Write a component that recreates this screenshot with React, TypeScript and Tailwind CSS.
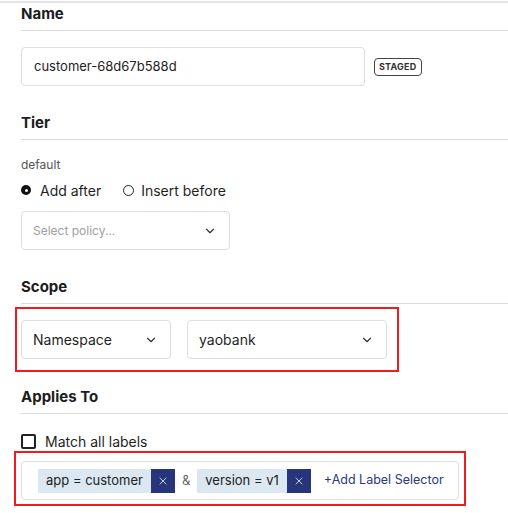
import { ChevronDown, X } from "lucide-react";

const font = { fontFamily: "Inter, 'Open Sans', sans-serif" };

function Heading({ children, className = "" }: { children: string; className?: string }) {
  return (
    <div className={className}>
      <div className="text-[15px] leading-5 font-bold text-[#1c1c1c]">{children}</div>
      <div className="mt-[6px] h-px bg-[#dcdcdc]" />
    </div>
  );
}

function Select({ value, placeholder, width }: { value?: string; placeholder?: string; width: string }) {
  return (
    <div
      className={`${width} h-[39px] shrink-0 rounded-[4px] border border-[#dddddd] bg-white flex items-center justify-between pl-[11px] pr-[12px]`}
    >
      {value ? (
        <span className="text-[14px] text-[#1f1f1f]">{value}</span>
      ) : (
        <span className="text-[12px] text-[#a0a0a0]">{placeholder}</span>
      )}
      <ChevronDown className="w-[14px] h-[14px] text-[#333]" strokeWidth={2} />
    </div>
  );
}

function Chip({ label }: { label: string }) {
  return (
    <div className="flex h-6 items-stretch">
      <span className="flex items-center bg-[#dce8f1] px-[8px] text-[13px] text-[#222]">{label}</span>
      <span className="flex w-6 items-center justify-center bg-[#27357a]">
        <X className="w-[12px] h-[12px] text-white" strokeWidth={1.5} />
      </span>
    </div>
  );
}

export default function App() {
  return (
    <div className="min-h-screen bg-white pt-px" style={font}>
      <div className="border-t-2 border-[#e3e3e8] pl-[21px] pt-[1px] pb-4">
        {/* Name */}
        <Heading>Name</Heading>
        <div className="mt-4 flex items-center gap-[9px]">
          <div className="w-[344px] h-[39px] rounded-[4px] border border-[#dddddd] flex items-center pl-[12px] text-[13px] text-[#222]">
            customer-68d67b588d
          </div>
          <span className="rounded-[4px] border border-[#444] px-[4px] h-[18px] flex items-center text-[9px] font-bold tracking-wide text-[#333]">
            STAGED
          </span>
        </div>

        {/* Tier */}
        <Heading className="mt-[27px]">Tier</Heading>
        <div className="mt-[17px] text-[12px] leading-4 text-[#555]">default</div>
        <div className="mt-[7px] flex h-5 items-center text-[14px] text-[#1f1f1f]">
          <span className="flex h-[10px] w-[10px] items-center justify-center rounded-full bg-[#111]">
            <span className="h-[3px] w-[3px] rounded-full bg-white" />
          </span>
          <span className="ml-[9px]">Add after</span>
          <span className="ml-[22px] h-[11px] w-[11px] rounded-full border-[1.5px] border-[#222]" />
          <span className="ml-[7px]">Insert before</span>
        </div>
        <div className="mt-[11px]">
          <Select placeholder="Select policy..." width="w-[209px]" />
        </div>

        {/* Scope */}
        <Heading className="mt-[27px]">Scope</Heading>
        <div className="mt-[3px] -ml-[6px] w-[384px] border-2 border-[#ee1c1c] pl-[4px] py-[11px] flex gap-4">
          <Select value="Namespace" width="w-[150px]" />
          <Select value="yaobank" width="w-[200px]" />
        </div>

        {/* Applies To */}
        <Heading className="mt-[15px]">Applies To</Heading>
        <div className="mt-[17px] flex h-5 items-center text-[14px] text-[#1f1f1f]">
          <span className="h-[15px] w-[15px] rounded-[2px] border-2 border-[#222]" />
          <span className="ml-[9px]">Match all labels</span>
        </div>
        <div className="-ml-[7px] w-[452px] border-2 border-[#ee1c1c] pl-[5px] pt-[8px] pb-[4px]">
          <div className="w-[438px] h-[39px] rounded-[4px] border border-[#dddddd] flex items-center pl-[16px]">
            <Chip label="app = customer" />
            <span className="mx-[7px] text-[13px] text-[#666]">&amp;</span>
            <Chip label="version = v1" />
            <span className="ml-[13px] text-[12.5px] text-[#2b3a7c]">+Add Label Selector</span>
          </div>
        </div>
      </div>
    </div>
  );
}
